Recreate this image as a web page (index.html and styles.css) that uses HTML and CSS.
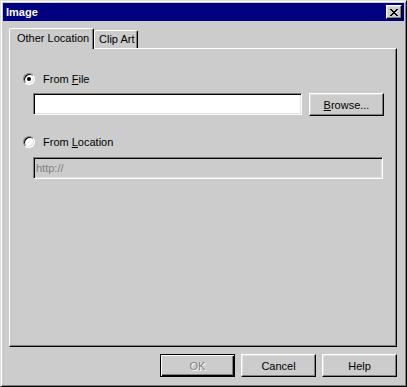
FILE: index.html
```html
<!DOCTYPE html>
<html lang="en">

<head>
    <meta charset="UTF-8">
    <title>Image</title>
    <link rel="stylesheet" href="styles.css">
</head>

<body>

    <div class="window">
        <!-- Title bar -->
        <div class="titlebar">
            <span class="title">Image</span>
            <button class="close" type="button">
                <svg width="8" height="7" viewBox="0 0 8 7">
                    <path d="M0 0h2v1h-2zM6 0h2v1h-2zM1 1h2v1h-2zM5 1h2v1h-2zM2 2h4v1h-4zM3 3h2v1h-2zM2 4h4v1h-4zM1 5h2v1h-2zM5 5h2v1h-2zM0 6h2v1h-2zM6 6h2v1h-2z" fill="#000"/>
                </svg>
            </button>
        </div>

        <div class="dialog-body">
            <!-- Tabs -->
            <div class="tabs">
                <div class="tab tab-active">Other Location</div>
                <div class="tab tab-clip">Clip Art</div>
            </div>

            <div class="panel">
                <div class="option">
                    <span class="radio checked"></span>
                    <span>From <u>F</u>ile</span>
                </div>
                <div class="field-row">
                    <input type="text" class="field">
                    <button class="btn" type="button"><u>B</u>rowse...</button>
                </div>

                <div class="option option-second">
                    <span class="radio"></span>
                    <span>From <u>L</u>ocation</span>
                </div>
                <div class="field-row">
                    <input type="text" class="field field-disabled" value="http://" disabled>
                </div>
            </div>

            <!-- Buttons -->
            <div class="buttons">
                <button class="btn btn-default" type="button" disabled>OK</button>
                <button class="btn" type="button">Cancel</button>
                <button class="btn" type="button">Help</button>
            </div>
        </div>
    </div>

</body>

</html>
```

FILE: styles.css
```css
/* Windows classic dialog */
body {
    margin: 0;
    font-family: "Liberation Sans", Arial, sans-serif;
    font-size: 11px;
    color: #000;
    background: #ccc;
}

.window {
    width: 407px;
    height: 387px;
    box-sizing: border-box;
    border: 1px solid;
    border-color: #dfdfdf #000 #000 #dfdfdf;
    box-shadow: inset 1px 1px #fff, inset -1px -1px #808080;
    padding: 2px;
    background: #ccc;
    display: flex;
    flex-direction: column;
}

.titlebar {
    height: 18px;
    background: #000080;
    display: flex;
    align-items: center;
    justify-content: space-between;
    padding: 0 2px 0 3px;
}

.title {
    color: #fff;
    font-weight: bold;
    font-size: 11px;
}

.close {
    width: 16px;
    height: 14px;
    padding: 0;
    margin: 0;
    border: 1px solid;
    border-color: #fff #000 #000 #fff;
    box-shadow: inset -1px -1px #808080, inset 1px 1px #dfdfdf;
    background: #ccc;
    display: flex;
    align-items: center;
    justify-content: center;
}

.close svg {
    display: block;
    margin-left: -1px;
}

.dialog-body {
    flex: 1;
    display: flex;
    flex-direction: column;
    padding: 7px 7px 7px 6px;
}

.tabs {
    height: 20px;
    display: flex;
    align-items: flex-end;
}

.tab {
    box-sizing: border-box;
    border: 1px solid;
    border-bottom: none;
    border-color: #fff #000 transparent #fff;
    box-shadow: inset -1px 0 #808080;
    border-radius: 2px 2px 0 0;
    background: #ccc;
    line-height: 17px;
    white-space: nowrap;
}

.tab-active {
    position: relative;
    z-index: 1;
    width: 85px;
    height: 21px;
    margin-bottom: -1px;
    padding: 1px 0 0 7px;
}

.tab-clip {
    width: 44px;
    height: 18px;
    padding: 0 0 0 4px;
}

.panel {
    flex: 1;
    border: 1px solid;
    border-color: #fff #000 #000 #fff;
    box-shadow: inset -1px -1px #808080;
    padding: 23px 12px 0 13px;
}

.option {
    display: flex;
    align-items: center;
    gap: 8px;
    height: 14px;
}

.option-second {
    margin-top: 19px;
}

.radio {
    width: 12px;
    height: 12px;
    box-sizing: border-box;
    border-radius: 50%;
    border: 1px solid;
    border-color: #808080 #fff #fff #808080;
    box-shadow: inset 1px 1px #000, inset -1px -1px #dfdfdf;
    background: #fff;
    display: flex;
    align-items: center;
    justify-content: center;
}

.radio.checked::after {
    content: "";
    width: 4px;
    height: 4px;
    border-radius: 50%;
    background: #000;
}

.field-row {
    display: flex;
    gap: 7px;
    margin: 7px 0 0 10px;
}

.option-second + .field-row {
    margin-top: 8px;
}

.field {
    width: 269px;
    height: 22px;
    box-sizing: border-box;
    margin: 0;
    padding: 0 2px;
    border: 1px solid;
    border-color: #808080 #fff #fff #808080;
    box-shadow: inset 1px 1px #000, inset -1px -1px #dfdfdf;
    background: #fff;
    font-family: "Liberation Sans", Arial, sans-serif;
    font-size: 11px;
    outline: none;
}

.field-disabled {
    width: 350px;
    background: #ccc;
    color: #808080;
}

.btn {
    width: 75px;
    height: 23px;
    box-sizing: border-box;
    margin: 0;
    padding: 0;
    border: 1px solid;
    border-color: #fff #000 #000 #fff;
    box-shadow: inset -1px -1px #808080, inset 1px 1px #dfdfdf;
    background: #ccc;
    color: #000;
    font-family: "Liberation Sans", Arial, sans-serif;
    font-size: 11px;
}

.buttons {
    display: flex;
    justify-content: flex-end;
    gap: 6px;
    margin-top: 7px;
}

.btn-default {
    border-color: #000;
    box-shadow: inset 1px 1px #fff, inset -1px -1px #000, inset -2px -2px #808080;
}

.btn:disabled {
    color: #808080;
    text-shadow: 1px 1px #fff;
}
```
